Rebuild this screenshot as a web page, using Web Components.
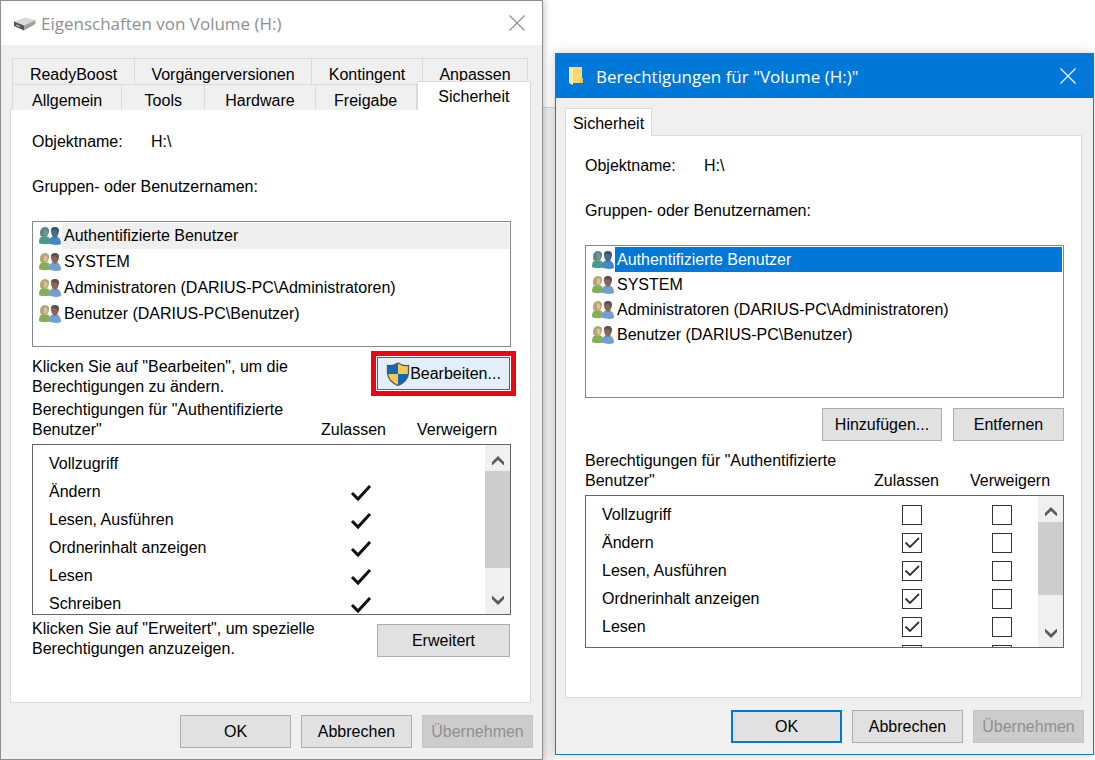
<!DOCTYPE html>
<html lang="de">
<head>
<meta charset="utf-8">
<title>Eigenschaften von Volume (H:)</title>
<style>
  body { margin: 0; background: #fff; color: #000; font: 16px/20px "Liberation Sans", Arial, sans-serif; }
</style>
</head>
<body>
<desk-top>
  <dialog-window heading="Eigenschaften von Volume (H:)" icon="drive">
    <tab-sheet>
      <tab-row slot="tabs">
        <tab-button style="flex-grow:122">ReadyBoost</tab-button>
        <tab-button style="flex-grow:177">Vorgängerversionen</tab-button>
        <tab-button style="flex-grow:111">Kontingent</tab-button>
        <tab-button style="flex-grow:105">Anpassen</tab-button>
      </tab-row>
      <tab-row slot="tabs" front>
        <tab-button style="flex-grow:109">Allgemein</tab-button>
        <tab-button style="flex-grow:83">Tools</tab-button>
        <tab-button style="flex-grow:110">Hardware</tab-button>
        <tab-button style="flex-grow:101">Freigabe</tab-button>
        <tab-button style="flex-grow:114" selected>Sicherheit</tab-button>
      </tab-row>
      <object-name value="H:\"></object-name>
      <user-list row="26" lines="124" tone="#efefef">
        <user-item selected>Authentifizierte Benutzer</user-item>
        <user-item>SYSTEM</user-item>
        <user-item>Administratoren (DARIUS-PC\Administratoren)</user-item>
        <user-item>Benutzer (DARIUS-PC\Benutzer)</user-item>
      </user-list>
      <hint-row>
        Klicken Sie auf "Bearbeiten", um die Berechtigungen zu ändern.
        <push-button slot="action" kind="shield">Bearbeiten...</push-button>
      </hint-row>
      <permission-table readonly height="169" thumb="97" allowed="1,2,3,4,5"></permission-table>
      <hint-row plain>
        Klicken Sie auf "Erweitert", um spezielle Berechtigungen anzuzeigen.
        <push-button slot="action">Erweitert</push-button>
      </hint-row>
    </tab-sheet>
    <push-button slot="buttons">OK</push-button>
    <push-button slot="buttons">Abbrechen</push-button>
    <push-button slot="buttons" disabled>Übernehmen</push-button>
  </dialog-window>

  <dialog-window active heading='Berechtigungen für "Volume (H:)"' icon="folder">
    <tab-sheet single>
      <tab-row slot="tabs" front single>
        <tab-button selected>Sicherheit</tab-button>
      </tab-row>
      <object-name value="H:\"></object-name>
      <user-list row="25" lines="151" tone="#0078d7" ink="#fff">
        <user-item selected>Authentifizierte Benutzer</user-item>
        <user-item>SYSTEM</user-item>
        <user-item>Administratoren (DARIUS-PC\Administratoren)</user-item>
        <user-item>Benutzer (DARIUS-PC\Benutzer)</user-item>
      </user-list>
      <button-row>
        <push-button style="width:120px">Hinzufügen...</push-button>
        <push-button>Entfernen</push-button>
      </button-row>
      <permission-table height="151" thumb="73" allowed="1,2,3,4"></permission-table>
    </tab-sheet>
    <push-button slot="buttons" primary>OK</push-button>
    <push-button slot="buttons">Abbrechen</push-button>
    <push-button slot="buttons" disabled>Übernehmen</push-button>
  </dialog-window>
</desk-top>

<script>
const ICONS = {
  drive: `<svg width="24" height="18" viewBox="0 0 24 18"><path d="M2 7.500 13 3.500 23.500 6 12 11.500z" fill="#dadada"/><path d="M2 7.500 12 11.500V16.500L2 12z" fill="#555"/><path d="M12 11.500 23.500 6V10L12 16.500z" fill="#a2a2a2"/><path d="M4 10.500 8 12V13L4 11.500z" fill="#d5d5d5"/></svg>`,
  folder: `<svg width="18" height="20" viewBox="0 0 18 20"><path d="M2 1H15V12L16 13V17H6L2 16z" fill="#fbd873"/><path d="M2 1 6 3V19L2 17z" fill="#ffeaa5"/><path d="M14 12H16V17H13z" fill="#f0c252"/></svg>`,
  close: `<svg width="16" height="16" viewBox="0 0 16 16"><path d="M.5.5 15.5 15.5M15.5.5.5 15.5" fill="none" stroke="currentColor" stroke-width="1.2"/></svg>`,
  shield: `<svg width="24" height="24" viewBox="0 0 24 24"><defs><clipPath id="s"><path d="M12 1C9 3 5 4 1.500 3.500V11C2 17 6 21 12 23.500C18 21 22 17 22.500 11V3.500C19 4 15 3 12 1z"/></clipPath></defs><g clip-path="url(#s)"><path d="M0 0H12V12H0zM12 12H24V24H12z" fill="#1168b8"/><path d="M12 0H24V12H12zM0 12H12V24H0z" fill="#fcc64d"/></g><path d="M12 1C9 3 5 4 1.500 3.500V11C2 17 6 21 12 23.500C18 21 22 17 22.500 11V3.500C19 4 15 3 12 1z" fill="none" stroke="#4d5a60" stroke-width="1.300"/></svg>`,
  people: `<svg width="24" height="20" viewBox="0 0 24 20"><path d="M1 17C1 13 2 10.500 5 10L9 10.500C12 11 12.500 14 12 17.500 8 18.500 4 18.500 1 17z" fill="var(--a,#86ad58)"/><path d="M2.500 10C1 5 3 1 7 1 10.500 1 12 4 10.500 7.500L9 10.500z" fill="var(--b,#b5a673)"/><path d="M6 3.500C9 3.500 10 5 9.500 7 9 9.500 7.500 10 6 9z" fill="var(--c,#dfc199)"/><path d="M11 17.500C10.500 14 12 11 15 10.500L19 10.500C22 11.500 23 15 23 18 19 19.500 15 19 11 17.500z" fill="var(--d,#719fd2)"/><path d="M13 6C12.500 2.500 14 1 17 1 20.500 1 21.500 3.500 20.500 7 20 10.500 18 12.500 16 11.500 14 10.500 13.500 8.500 13 6z" fill="var(--e,#8b6658)"/><path d="M13 4C14 0 20 0 21 4L20 8 18.500 4.500z" fill="var(--f,#5c5052)"/></svg>`,
  tick: `<svg width="24" height="28" viewBox="0 0 24 28"><path d="M3 15 9 21 21 8" fill="none" stroke="#111" stroke-width="3"/></svg>`,
  up: `<svg width="12" height="9" viewBox="0 0 12 9"><path d="M0 6 6 0 12 6V9.500L6 4 0 9.500z" fill="#5a5a5a"/></svg>`,
  down: `<svg width="12" height="9" viewBox="0 0 12 9"><path d="M0 3 6 9 12 3V-.5L6 5 0-.5z" fill="#5a5a5a"/></svg>`
};

function define(name, render) {
  customElements.define(name, class extends HTMLElement {
    constructor() {
      super();
      this.attachShadow({ mode: "open" });
    }
    connectedCallback() {
      const template = document.createElement("template");
      template.innerHTML = `<style>*{box-sizing:border-box}:host{display:block;box-sizing:border-box}</style>` + render(this);
      this.shadowRoot.replaceChildren(template.content.cloneNode(true));
    }
  });
}

define("desk-top", () => `<style>
  :host { display: grid; grid-template-columns: 543fr 539fr; column-gap: 12px; align-items: start; padding-right: 1px; min-height: 100vh;
    background: linear-gradient(#d4d4d4, #d4d4d4) 0 107px / 555px 1px no-repeat, linear-gradient(#f0f0f0, #f0f0f0) 0 108px / 555px 100% no-repeat, #fff; }
</style><slot></slot>`);

define("dialog-window", el => `<style>
  :host { border: 1px solid #8e8e8e; background: #f0f0f0; box-shadow: 0 0 8px rgba(0,0,0,.3); }
  :host([active]) { border-color: #1f78b8; margin-top: 53px; box-shadow: 0 0 10px rgba(0,0,0,.2); }
  header { display: flex; align-items: center; height: 44px; padding: 0 17px 0 11px; background: #fff; color: #8f8f8f; }
  :host([active]) header { background: #0078d7; color: #fff; }
  h1 { flex: 1; margin: 2px 0 0 5px; font: 17px/24px "Open Sans", "Noto Sans", sans-serif; }
  :host([active]) h1 { margin-left: 11px; }
  header button { display: grid; padding: 0; border: 0; background: none; color: inherit; }
  main { padding: 13px 11px 12px 9px; }
  :host([active]) main { padding: 12px 11px 12px 9px; }
  footer { display: flex; justify-content: flex-end; gap: 10px; padding: 0 9px 11px; }
</style>
<header>${ICONS[el.getAttribute("icon")]}<h1>${el.getAttribute("heading")}</h1><button aria-label="Schließen">${ICONS.close}</button></header>
<main><slot></slot></main><footer><slot name="buttons"></slot></footer>`);

define("tab-sheet", () => `<style>
  section { padding: 22px 19px 43px 21px; border: 1px solid #dadada; border-top: 0; background: #fff; }
  :host([single]) section { padding: 20px 17px 49px 19px; }
</style><slot name="tabs"></slot><section><slot></slot></section>`);

define("tab-row", () => `<style>
  :host { display: flex; height: 26px; margin: 0 3px 0 2px; border-left: 1px solid #dadada; }
  :host([front]) { align-items: flex-end; margin: 0; border-left: 0; padding-left: 2px; background: linear-gradient(#dadada, #dadada) bottom / 100% 1px no-repeat; }
  :host([single]) { padding-left: 0; }
  :host([front]) ::slotted(tab-button:first-child) { border-left: 1px solid #dadada; }
  :host([single]) ::slotted(tab-button) { flex: none; width: 87px; height: 28px; }
</style><slot></slot>`);

define("tab-button", () => `<style>
  :host { flex: 1 1 0; height: 26px; }
  button { display: block; width: 100%; height: 100%; padding: 4px 0 0; border: solid #dadada; border-width: 1px 1px 0 0; background: #f0f0f0; color: inherit; font: inherit; }
  :host(:not([selected])) button { height: calc(100% - 0px); }
  span { display: block; height: 18px; overflow: hidden; line-height: 20px; }
  :host([selected]) { position: relative; height: 29px; flex-shrink: 0; }
  :host([selected]) button { padding: 0; background: #fff; }
  :host([selected]:not(:first-child)) button { border-left-width: 1px; }
</style><button role="tab"><span><slot></slot></span></button>`);

define("object-name", el => `<style>
  dl { display: flex; margin: 0 0 25px; }
  dt { width: 119px; } dd { margin: 0; }
  p { margin: 0 0 24px; }
</style><dl><dt>Objektname:</dt><dd>${el.getAttribute("value")}</dd></dl><p>Gruppen- oder Benutzernamen:</p>`);

define("user-list", el => `<style>
  :host { --row: ${el.getAttribute("row")}px; --tone: ${el.getAttribute("tone")}; --ink: ${el.getAttribute("ink") || "#000"};
    min-height: calc(${el.getAttribute("lines")}px + 2px); padding: 1px; border: 1px solid #828790; }
</style><slot></slot>`);

define("user-item", () => `<style>
  :host { display: flex; align-items: center; height: var(--row); padding-left: 4px; }
  :host([selected]) { --a:#479d87; --b:#608588; --c:#72979a; --d:#4289cb; --e:#4b6c8b; --f:#3d5670; }
  span { flex: 1; align-self: stretch; padding-left: 2px; line-height: var(--row); white-space: nowrap; }
  :host([selected]) span { background: var(--tone); color: var(--ink); }
  svg { flex: none; }
</style>${ICONS.people}<span><slot></slot></span>`);

define("push-button", el => `<style>
  :host { width: 111px; flex: none; }
  button { display: flex; align-items: center; justify-content: center; width: 100%; height: 33px; padding: 0; border: 1px solid #adadad; background: #e1e1e1; color: #000; font: inherit; white-space: nowrap; }
  :host([primary]) button { border: 2px solid #0078d7; }
  button:disabled { border-color: #c4c4c4; background: #ccc; color: #909090; }
  :host([kind]) button { border-color: #2d6b9c; background: #e2eefa; outline: 5px solid #e90710; outline-offset: 1px; }
</style><button ${el.hasAttribute("disabled") ? "disabled" : ""}>${el.getAttribute("kind") ? ICONS.shield : ""}<slot></slot></button>`);

define("button-row", () => `<style>
  :host { display: flex; justify-content: flex-end; gap: 11px; margin: 10px 0; }
</style><slot></slot>`);

define("hint-row", () => `<style>
  :host { display: flex; justify-content: space-between; margin: 10px 0 3px; }
  :host([plain]) { margin: 4px 0 0; }
  p { width: 290px; margin: 0; }
  ::slotted(push-button) { width: 133px; margin-right: 1px; }
  :host([plain]) ::slotted(push-button) { margin-top: 5px; }
</style><p><slot></slot></p><slot name="action"></slot>`);

define("scroll-bar", () => `<style>
  :host { display: flex; flex-direction: column; background: #f0f0f0; }
  button { display: grid; place-items: center; flex: none; height: 26px; padding: 4px 0 0; border: 0; background: none; }
  button:last-child { padding: 0 0 2px; margin-top: auto; }
  div { height: var(--thumb); background: #cdcdcd; }
</style><button aria-label="Nach oben">${ICONS.up}</button><div></div><button aria-label="Nach unten">${ICONS.down}</button>`);

define("permission-table", el => {
  const readonly = el.hasAttribute("readonly");
  const allowed = el.getAttribute("allowed").split(",").map(Number);
  const names = ["Vollzugriff", "Ändern", "Lesen, Ausführen", "Ordnerinhalt anzeigen", "Lesen", "Schreiben"];
  const visible = Math.floor(el.getAttribute("height") / 28);
  const cell = (name, kind, on) => readonly ? (on ? ICONS.tick : "") : `<input type="checkbox" aria-label="${name}: ${kind}" ${on ? "checked" : ""}>`;
  const rows = names.map((name, i) => `<tr><th scope="row" aria-label="${name}">${i < visible ? name : ""}</th><td>${cell(name, "Zulassen", allowed.includes(i))}</td><td>${cell(name, "Verweigern", false)}</td></tr>`).join("");
  return `<style>
  :host { display: grid; grid-template-columns: 1fr auto; --thumb: ${el.getAttribute("thumb")}px; }
  table { display: contents; }
  thead { display: block; grid-column: 1 / -1; }
  tr { display: grid; }
  th { padding: 0; font-weight: normal; text-align: left; }
  td { display: grid; align-items: center; padding: 0; }
  thead tr { grid-template-columns: 1fr 96px 94px; align-items: end; margin-bottom: 4px; }
  tbody { display: block; height: ${+el.getAttribute("height") + 2}px; padding-top: 5px; overflow: hidden; border: 1px solid #646464; border-right: 0; }
  tbody tr { grid-template-columns: 1fr 90px 46px; height: 28px; padding-left: 16px; line-height: 28px; }
  scroll-bar { grid-column: 2; width: 26px; border: 1px solid #646464; border-left: 0; }
  input { appearance: none; width: 20px; height: 20px; margin: 0; border: 1px solid #333; background: #fff; }
  input:checked { background: #fff url("data:image/svg+xml,%3Csvg xmlns='http://www.w3.org/2000/svg' viewBox='0 0 18 18'%3E%3Cpath d='M2.500 8.500 7 13 16 4' fill='none' stroke='%23333' stroke-width='1.800'/%3E%3C/svg%3E"); }
</style>
<table><thead><tr><th scope="col">Berechtigungen für "Authentifizierte Benutzer"</th><th scope="col">Zulassen</th><th scope="col">Verweigern</th></tr></thead><tbody>${rows}</tbody></table>
<scroll-bar></scroll-bar>`;
});
</script>
</body>
</html>
